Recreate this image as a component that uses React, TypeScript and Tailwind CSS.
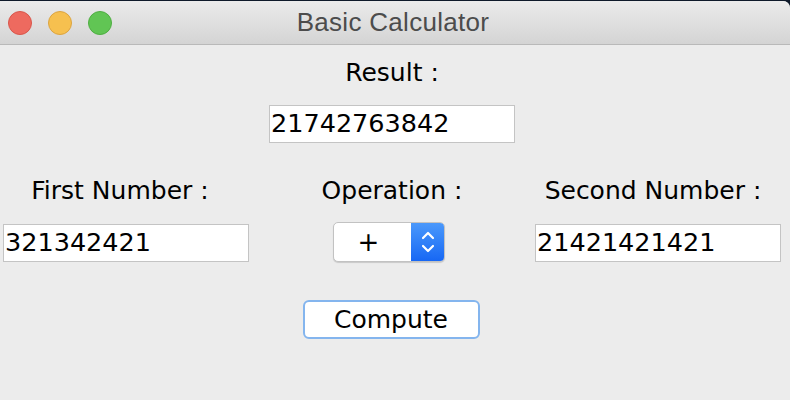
import React from "react"

const uiFont = { fontFamily: '"DejaVu Sans", "Liberation Sans", sans-serif' }

function TrafficLights() {
  return (
    <div className="flex items-center gap-[16px] pl-[8px]">
      <span className="h-[24px] w-[24px] rounded-full border border-[#d9564b] bg-[#ee6a5f]" />
      <span className="h-[24px] w-[24px] rounded-full border border-[#dca440] bg-[#f6c04f]" />
      <span className="h-[24px] w-[24px] rounded-full border border-[#4fae42] bg-[#61c554]" />
    </div>
  )
}

function TextField({ value }: { value: string }) {
  return (
    <div className="flex h-[38px] w-[246px] items-center border border-[#c4c4c4] bg-white pl-[1px] text-[25.5px] leading-none text-black">
      {value}
    </div>
  )
}

function OperationSelect() {
  return (
    <div className="flex h-[40px] w-[112px] overflow-hidden rounded-[5px] border border-[#c2c2c2] bg-white shadow-[0_1px_1px_rgba(0,0,0,0.15)]">
      <div className="flex flex-1 items-center justify-center pr-[8px] text-[26px] leading-none text-black">+</div>
      <div className="flex w-[33px] items-center justify-center bg-gradient-to-b from-[#4a98fb] to-[#1767f4]">
        <svg width="14" height="26" viewBox="0 0 14 26" fill="none" stroke="white" strokeWidth="2.2" strokeLinecap="round" strokeLinejoin="round">
          <path d="M2 9 L7 4 L12 9" />
          <path d="M2 17 L7 22 L12 17" />
        </svg>
      </div>
    </div>
  )
}

export default function App() {
  return (
    <div className="h-[400px] w-[790px] overflow-hidden bg-[#0f1a2a] pt-[1px]" style={uiFont}>
      <div className="flex h-[399px] flex-col rounded-tr-[7px] bg-[#ececec]">
        <header className="relative flex h-[44px] shrink-0 items-center rounded-tr-[7px] border-b border-[#b9b9b9] bg-gradient-to-b from-[#ebebeb] to-[#d4d4d4]">
          <TrafficLights />
          <span
            className="absolute left-0 right-0 top-[7px] pr-[4px] text-center text-[26px] leading-[28px] text-[#4c4c4c]"
            style={{ fontFamily: '"Liberation Sans", Arial, sans-serif', letterSpacing: "0.3px" }}
          >
            Basic Calculator
          </span>
        </header>

        <main className="flex flex-col items-center">
          <p className="mt-[14px] mr-[6px] h-[28px] text-[25px] leading-[28px] text-black">Result :</p>
          <div className="mt-[18px] mr-[6px]">
            <TextField value="21742763842" />
          </div>

          <div className="mt-[34px] flex w-full pl-[3px] pr-[9px]">
            <div className="flex w-[246px] flex-col items-center">
              <p className="mr-[12px] h-[28px] text-[25px] leading-[28px] text-black">First Number :</p>
              <div className="mt-[19px]">
                <TextField value="321342421" />
              </div>
            </div>
            <div className="flex flex-1 flex-col items-center">
              <p className="h-[28px] text-[25px] leading-[28px] text-black">Operation :</p>
              <div className="mr-[6px] mt-[17px]">
                <OperationSelect />
              </div>
            </div>
            <div className="flex w-[246px] flex-col items-center">
              <p className="mr-[10px] h-[28px] text-[25px] leading-[28px] text-black">Second Number :</p>
              <div className="mt-[19px]">
                <TextField value="21421421421" />
              </div>
            </div>
          </div>

          <button
            type="button"
            className="mt-[38px] mr-[8px] flex h-[39px] w-[177px] items-center justify-center rounded-[6px] border-2 border-[#84b5ee] bg-white text-[25px] leading-none text-black"
          >
            Compute
          </button>
        </main>
      </div>
    </div>
  )
}
